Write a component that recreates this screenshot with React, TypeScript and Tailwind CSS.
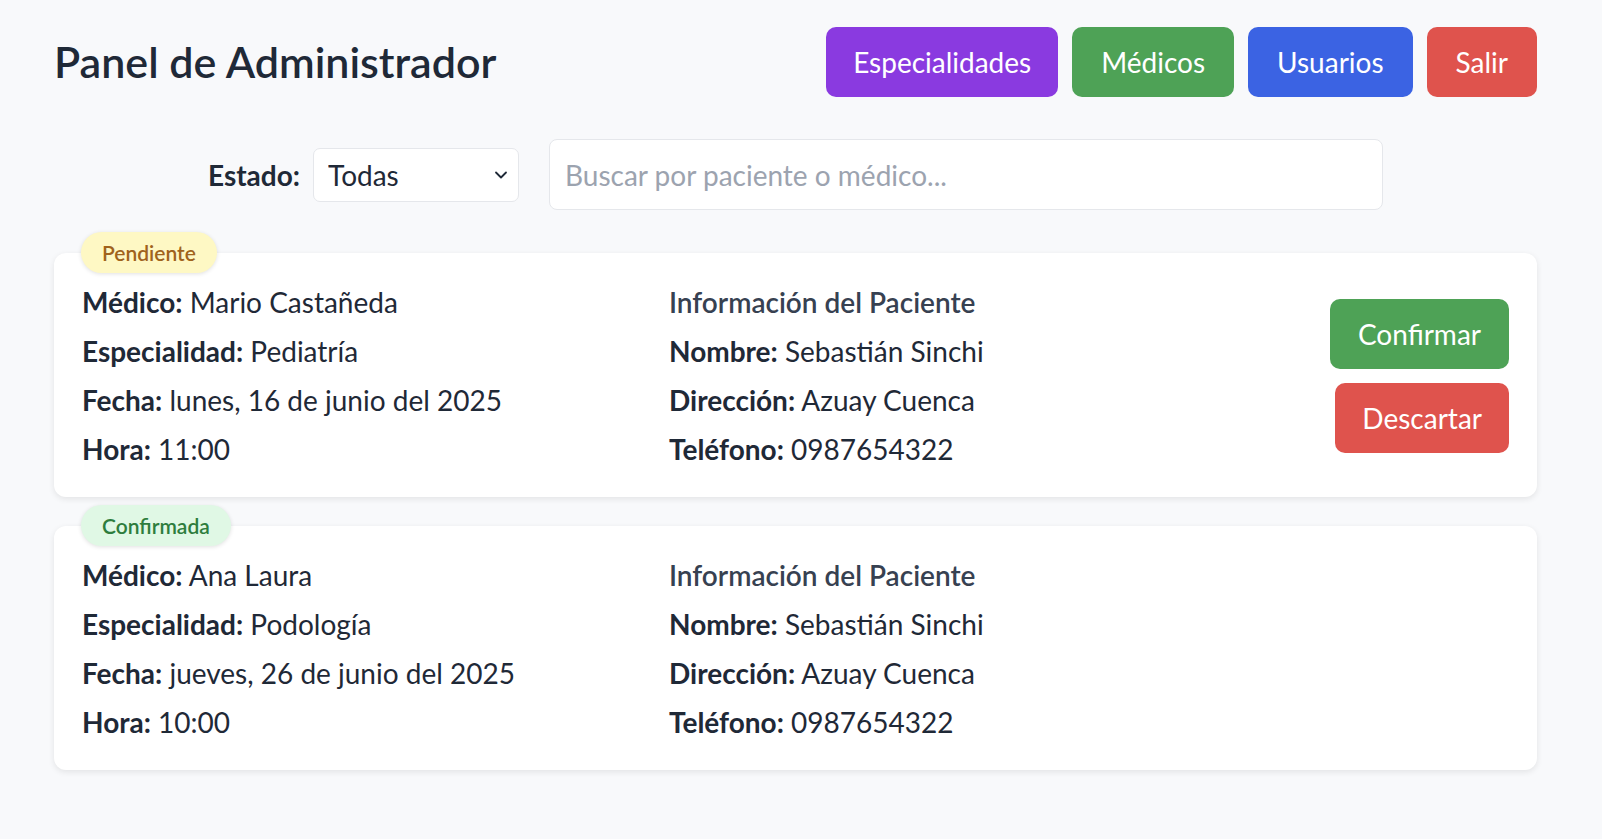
import { useState } from "react";
import { ChevronDown } from "lucide-react";

type Estado = "pendiente" | "confirmada";

interface Cita {
  id: number;
  estado: Estado;
  medico: string;
  especialidad: string;
  fecha: string;
  hora: string;
  paciente: string;
  direccion: string;
  telefono: string;
}

const citas: Cita[] = [
  {
    id: 1,
    estado: "pendiente",
    medico: "Mario Castañeda",
    especialidad: "Pediatría",
    fecha: "lunes, 16 de junio del 2025",
    hora: "11:00",
    paciente: "Sebastián Sinchi",
    direccion: "Azuay Cuenca",
    telefono: "0987654322",
  },
  {
    id: 2,
    estado: "confirmada",
    medico: "Ana Laura",
    especialidad: "Podología",
    fecha: "jueves, 26 de junio del 2025",
    hora: "10:00",
    paciente: "Sebastián Sinchi",
    direccion: "Azuay Cuenca",
    telefono: "0987654322",
  },
];

function Field({ label, value }: { label: string; value: string }) {
  return (
    <p className="leading-[49px]">
      <span className="font-bold">{label}:</span> {value}
    </p>
  );
}

function EstadoBadge({ estado }: { estado: Estado }) {
  const pendiente = estado === "pendiente";
  return (
    <span
      className={`absolute -top-[21px] left-[27px] flex h-[41px] items-center rounded-full px-[21px] text-[21px] font-semibold shadow-[0_1px_4px_rgba(0,0,0,0.12)] ${
        pendiente ? "bg-[#fef8c4] text-[#a0631c]" : "bg-[#e0f8e5] text-[#2e7d3d]"
      }`}
    >
      {pendiente ? "Pendiente" : "Confirmada"}
    </span>
  );
}

function CitaCard({ cita }: { cita: Cita }) {
  return (
    <div className="relative rounded-[12px] bg-white pt-[25px] pb-[23px] pl-[28px] pr-[28px] shadow-[0_2px_6px_rgba(0,0,0,0.09)]">
      <EstadoBadge estado={cita.estado} />
      <div className="grid grid-cols-[587px_1fr_auto] text-[28px] text-[#1f2937]">
        <div>
          <Field label="Médico" value={cita.medico} />
          <Field label="Especialidad" value={cita.especialidad} />
          <Field label="Fecha" value={cita.fecha} />
          <Field label="Hora" value={cita.hora} />
        </div>
        <div>
          <p className="leading-[49px] font-semibold text-[#374151]">
            Información del Paciente
          </p>
          <Field label="Nombre" value={cita.paciente} />
          <Field label="Dirección" value={cita.direccion} />
          <Field label="Teléfono" value={cita.telefono} />
        </div>
        {cita.estado === "pendiente" ? (
          <div className="flex flex-col items-end justify-center gap-[14px]">
            <button
              type="button"
              className="h-[70px] rounded-[10px] bg-[#4ea256] px-[28px] text-[28px] text-white"
            >
              Confirmar
            </button>
            <button
              type="button"
              className="h-[70px] rounded-[10px] bg-[#df534d] px-[27px] text-[28px] text-white"
            >
              Descartar
            </button>
          </div>
        ) : (
          <div />
        )}
      </div>
    </div>
  );
}

export default function App() {
  const [filtro, setFiltro] = useState("todas");
  const [busqueda, setBusqueda] = useState("");

  return (
    <div className="min-h-screen bg-[#f8f9fb] pt-[27px] pl-[54px] pr-[65px] pb-10 font-['Lato',sans-serif] text-[#1f2937]">
      <header className="flex h-[70px] items-center justify-between">
        <h1 className="text-[43px] font-semibold">Panel de Administrador</h1>
        <nav className="flex gap-[14px] text-[28px] text-white">
          <button type="button" className="h-[70px] rounded-[10px] bg-[#8a3ae0] px-[27px]">
            Especialidades
          </button>
          <button type="button" className="h-[70px] rounded-[10px] bg-[#4ea256] px-[29px]">
            Médicos
          </button>
          <button type="button" className="h-[70px] rounded-[10px] bg-[#3b63e3] px-[29px]">
            Usuarios
          </button>
          <button type="button" className="h-[70px] rounded-[10px] bg-[#df534d] px-[29px]">
            Salir
          </button>
        </nav>
      </header>

      <div className="mt-[42px] flex items-center justify-center">
        <label htmlFor="estado" className="text-[28px] font-bold">
          Estado:
        </label>
        <div className="relative ml-[13px]">
          <select
            id="estado"
            value={filtro}
            onChange={(e) => setFiltro(e.target.value)}
            className="h-[54px] w-[206px] appearance-none rounded-[7px] border border-[#e5e7eb] bg-white pl-[14px] text-[28px] text-[#1f2937] outline-none"
          >
            <option value="todas">Todas</option>
            <option value="pendiente">Pendiente</option>
            <option value="confirmada">Confirmada</option>
          </select>
          <ChevronDown
            size={20}
            strokeWidth={2.2}
            className="pointer-events-none absolute right-[8px] top-[17px] text-[#1f2937]"
          />
        </div>
        <input
          value={busqueda}
          onChange={(e) => setBusqueda(e.target.value)}
          placeholder="Buscar por paciente o médico..."
          className="ml-[30px] h-[71px] w-[834px] rounded-[8px] border border-[#e5e7eb] bg-white px-[15px] text-[28px] text-[#1f2937] outline-none placeholder:text-[#9ca3af]"
        />
      </div>

      <div className="mt-[43px] flex flex-col gap-[29px]">
        {citas.map((c) => (
          <CitaCard key={c.id} cita={c} />
        ))}
      </div>
    </div>
  );
}
